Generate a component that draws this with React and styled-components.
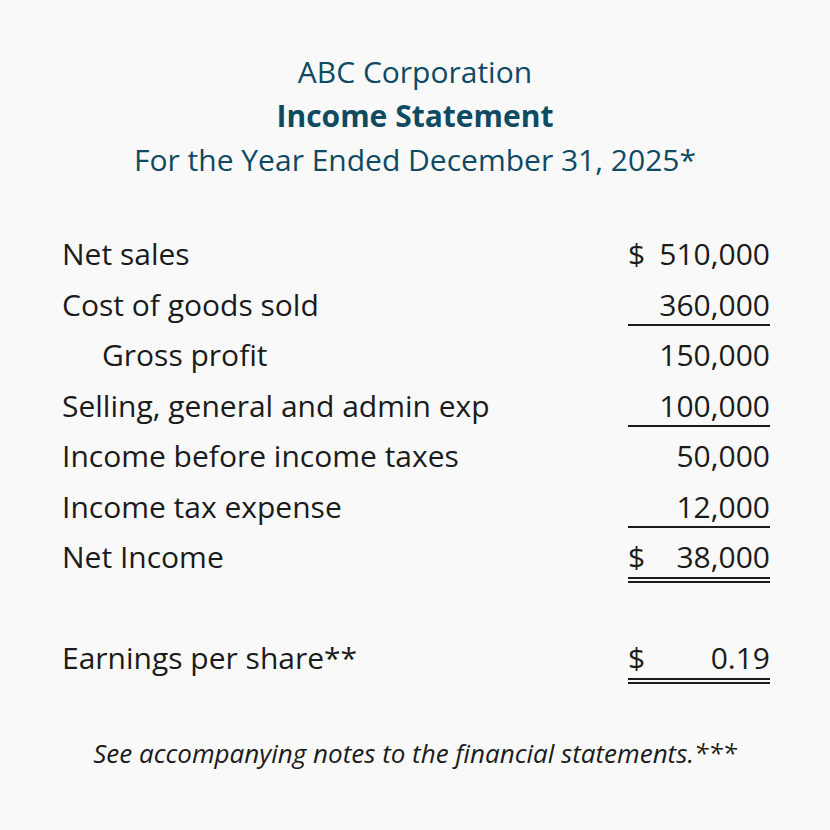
import React from "react";
import styled, { createGlobalStyle } from "styled-components";

const Global = createGlobalStyle`
  html, body { margin: 0; padding: 0; background: #f9f9f9; }
  body { font-family: "Open Sans", "Noto Sans", sans-serif; color: #1b1b1b; }
`;

const Page = styled.div`
  width: 830px;
  height: 830px;
  box-sizing: border-box;
  padding: 50px 60px 0 62px;
  background: #f9f9f9;
  display: flex;
  flex-direction: column;
`;

const Header = styled.header`
  display: flex;
  flex-direction: column;
  align-items: center;
  color: #0e4a62;
  font-size: 30px;
  line-height: 44px;
  margin-left: -2px;
`;

const HeaderLine = styled.div`
  font-weight: ${(p) => (p.$bold ? 700 : 400)};
`;

const Table = styled.div`
  display: grid;
  grid-template-columns: 1fr 142px;
  grid-auto-rows: 50.5px;
  margin-top: 47px;
  font-size: 30px;
  line-height: 50.5px;
`;

const Label = styled.div`
  padding-left: ${(p) => (p.$indent ? "40px" : "0")};
  white-space: nowrap;
`;

const Amount = styled.div`
  display: flex;
  justify-content: space-between;
  box-sizing: border-box;
  align-self: start;
  height: ${(p) => (p.$rule === "double" ? "51px" : p.$rule === "single" ? "46.5px" : "50.5px")};
  border-bottom: ${(p) =>
    p.$rule === "double" ? "6px double #1b1b1b" : p.$rule === "single" ? "2px solid #1b1b1b" : "none"};
`;

const Spacer = styled.div`
  grid-column: 1 / -1;
`;

const Footnote = styled.p`
  margin: 51px 0 0 -2px;
  text-align: center;
  font-style: italic;
  font-size: 26px;
  line-height: 36px;
`;

const rows = [
  { label: "Net sales", dollar: true, value: "510,000" },
  { label: "Cost of goods sold", value: "360,000", rule: "single" },
  { label: "Gross profit", value: "150,000", indent: true },
  { label: "Selling, general and admin exp", value: "100,000", rule: "single" },
  { label: "Income before income taxes", value: "50,000" },
  { label: "Income tax expense", value: "12,000", rule: "single" },
  { label: "Net Income", dollar: true, value: "38,000", rule: "double" },
];

const Row = ({ r }) => (
  <>
    <Label $indent={r.indent}>{r.label}</Label>
    <Amount $rule={r.rule}>
      <span>{r.dollar ? "$" : ""}</span>
      <span>{r.value}</span>
    </Amount>
  </>
);

export default function App() {
  return (
    <>
      <Global />
      <Page>
        <Header>
          <HeaderLine>ABC Corporation</HeaderLine>
          <HeaderLine $bold>Income Statement</HeaderLine>
          <HeaderLine>For the Year Ended December 31, 2025*</HeaderLine>
        </Header>
        <Table>
          {rows.map((r) => (
            <Row key={r.label} r={r} />
          ))}
          <Spacer />
          <Row r={{ label: "Earnings per share**", dollar: true, value: "0.19", rule: "double" }} />
        </Table>
        <Footnote>See accompanying notes to the financial statements.***</Footnote>
      </Page>
    </>
  );
}
